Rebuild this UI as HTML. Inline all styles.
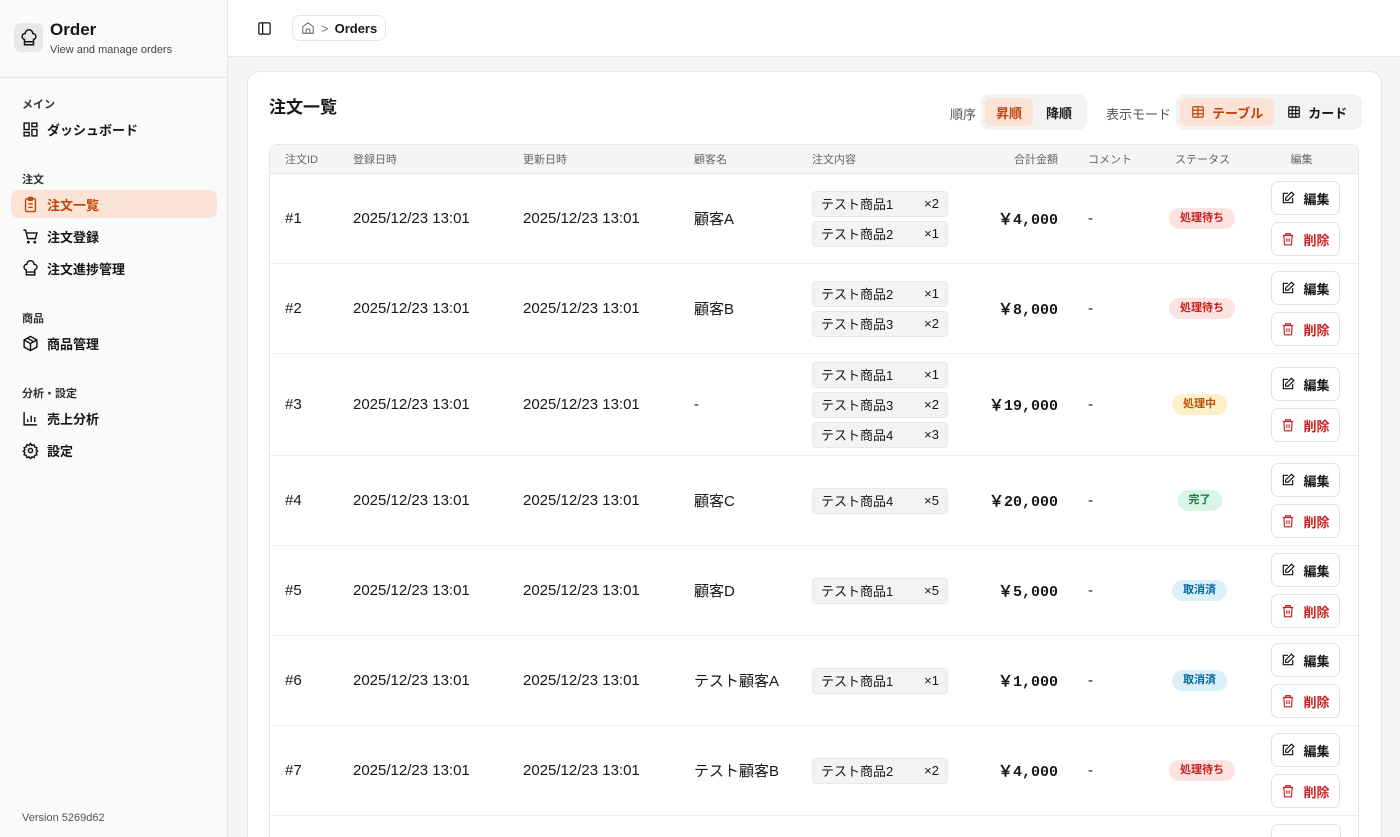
<!DOCTYPE html>
<html style="width:1400px;height:837px;overflow:hidden"><head><meta charset="utf-8"><style>
*{box-sizing:border-box;margin:0;padding:0}
body{width:1400px;height:837px;overflow:hidden;font-family:"Liberation Sans","Noto Sans CJK JP",sans-serif;color:#171717;background:#f5f5f5;position:relative}
.side{position:absolute;left:0;top:0;width:228px;height:837px;background:#fafafa;border-right:1px solid #e5e5e5}
.logo{position:absolute;left:14px;top:23px;width:29px;height:29px;border-radius:7px;background:#e8e8e8;display:flex;align-items:center;justify-content:center}
.t1{position:absolute;left:50px;top:20px;font-size:17px;font-weight:700}
.t2{position:absolute;left:50px;top:44px;font-size:11px;color:#444}
.sep{position:absolute;left:0;top:77px;width:227px;border-top:1px solid #e5e5e5}
.grp{position:absolute;left:22px;font-size:11px;font-weight:700;color:#333}
.item{position:absolute;left:11px;width:206px;height:28px;display:flex;align-items:center;padding-left:11px;font-size:13px;font-weight:700;border-radius:7px}
.item svg{margin-right:8px}
.item.act{background:#fbe4d5;color:#c2410c}
.ver{position:absolute;left:22px;top:812px;font-size:11px;color:#555}
.top{position:absolute;left:228px;top:0;width:1172px;height:57px;background:#fff;border-bottom:1px solid #e5e5e5}
.bc{position:absolute;left:64px;top:15px;height:26px;width:94px;border:1px solid #e5e5e5;border-radius:8px;display:flex;align-items:center;padding-left:8px;gap:6px;font-size:13px;font-weight:700}
.card{position:absolute;left:247px;top:71px;width:1135px;height:766px;background:#fff;border:1px solid #e5e5e5;border-bottom:none;border-radius:12px 12px 0 0;overflow:hidden}
h1{position:absolute;left:21px;top:21px;font-size:17px;font-weight:700}
.lbl{position:absolute;top:32px;font-size:13px;color:#555}
.seg{position:absolute;top:22px;height:36px;background:#f3f3f3;border-radius:8px;display:flex;align-items:center;padding:0 4px;gap:2px}
.seg span{height:28px;display:flex;align-items:center;padding:0 11px;font-size:13px;font-weight:700;border-radius:6px;gap:7px}
.seg .on{background:#fbe4d5;color:#c2410c}
table{position:absolute;left:21px;top:72px;width:1090px;border-collapse:separate;border-spacing:0;border:1px solid #e5e5e5;border-bottom:none;border-radius:8px 8px 0 0;table-layout:fixed}
th{height:29px;background:#f5f5f5;font-size:11px;color:#666;font-weight:400;text-align:left;padding:0 15px;border-bottom:1px solid #e5e5e5}
td{height:90px;font-size:15px;padding:0 15px;border-bottom:1px solid #eee;vertical-align:middle}
.r{text-align:right}.c{text-align:center}
td.c{padding:0 15px 0 9px}
.amt{font-family:"Liberation Mono","DejaVu Sans Mono",monospace;font-weight:700;font-size:15px;text-align:right}
.chip{width:136px;height:26px;background:#f3f3f3;border:1px solid #e8e8e8;border-radius:4px;display:flex;justify-content:space-between;align-items:center;padding:0 8px;font-size:13px;margin:4px 0}
.chip b{font-weight:400}
.st{display:inline-block;white-space:nowrap;height:21px;line-height:21px;padding:0 11px;border-radius:11px;font-size:11px;font-weight:700}
.pw{background:#fde2e2;color:#c81e1e}.pm{background:#fdf0c8;color:#b45309}.dn{background:#d9f5e8;color:#15803d}.cn{background:#dcf0fb;color:#0369a1}
.btn{width:69px;height:34px;border:1px solid #e2e2e2;border-radius:7px;display:flex;align-items:center;justify-content:center;gap:8px;font-size:13px;font-weight:700;margin:7px 0 7px 26px;background:#fff}
.del{color:#c81e1e}
</style></head><body>
<div class="side">
<div class="logo"><svg width="18" height="18" viewBox="0 0 24 24" fill="none" stroke="#111" stroke-width="2"><path d="M6 13.9A4 4 0 0 1 7 6a5 5 0 0 1 10 0 4 4 0 0 1 1 7.9V21H6z M6 17h12"/></svg></div>
<div class="t1">Order</div><div class="t2">View and manage orders</div>
<div class="sep"></div>
<div class="grp" style="top:96px">メイン</div>
<div class="item" style="top:115px"><svg width="17" height="17" viewBox="0 0 24 24" fill="none" stroke="#111" stroke-width="2"><rect x="3" y="3" width="7" height="9"/><rect x="14" y="3" width="7" height="5"/><rect x="14" y="12" width="7" height="9"/><rect x="3" y="16" width="7" height="5"/></svg>ダッシュボード</div>
<div class="grp" style="top:171px">注文</div>
<div class="item act" style="top:190px"><svg width="17" height="17" viewBox="0 0 24 24" fill="none" stroke="#c2410c" stroke-width="2"><rect x="5" y="4" width="14" height="18" rx="2"/><rect x="9" y="2" width="6" height="4" rx="1"/><path d="M9 11h6M9 16h6"/></svg>注文一覧</div>
<div class="item" style="top:222px"><svg width="17" height="17" viewBox="0 0 24 24" fill="none" stroke="#111" stroke-width="2"><path d="M2 3h3l3 12h11l2-8H6"/><circle cx="9" cy="20" r="1"/><circle cx="18" cy="20" r="1"/></svg>注文登録</div>
<div class="item" style="top:254px"><svg width="17" height="17" viewBox="0 0 24 24" fill="none" stroke="#111" stroke-width="2"><path d="M6 13.9A4 4 0 0 1 7 6a5 5 0 0 1 10 0 4 4 0 0 1 1 7.9V21H6z M6 17h12"/></svg>注文進捗管理</div>
<div class="grp" style="top:310px">商品</div>
<div class="item" style="top:329px"><svg width="17" height="17" viewBox="0 0 24 24" fill="none" stroke="#111" stroke-width="2"><path d="M12 2l9 5v10l-9 5-9-5V7z M3 7l9 5 9-5 M12 12v10 M7.5 4.5l9 5"/></svg>商品管理</div>
<div class="grp" style="top:385px">分析・設定</div>
<div class="item" style="top:404px"><svg width="17" height="17" viewBox="0 0 24 24" fill="none" stroke="#111" stroke-width="2"><path d="M3 3v18h18M8 17v-4M13 17V8M18 17v-7"/></svg>売上分析</div>
<div class="item" style="top:436px"><svg width="17" height="17" viewBox="0 0 24 24" fill="none" stroke="#111" stroke-width="2"><circle cx="12" cy="12" r="3"/><path d="M12 2l2 3 3-1 1 3 3 1-1 3 2 2-2 2 1 3-3 1-1 3-3-1-2 3-2-3-3 1-1-3-3-1 1-3-2-2 2-2-1-3 3-1 1-3 3 1z"/></svg>設定</div>
<div class="ver">Version 5269d62</div>
</div>
<div class="top">
<svg style="position:absolute;left:29px;top:21px" width="15" height="15" viewBox="0 0 24 24" fill="none" stroke="#111" stroke-width="2"><rect x="3" y="3" width="18" height="18" rx="2"/><path d="M9 3v18"/></svg>
<div class="bc"><svg width="14" height="14" viewBox="0 0 24 24" fill="none" stroke="#777" stroke-width="2"><path d="M3 10l9-7 9 7v11H3z M9 21v-7h6v7"/></svg><span style="color:#777;font-weight:400">&gt;</span>Orders</div>
</div>
<div class="card">
<h1>注文一覧</h1>
<div class="lbl" style="left:702px">順序</div>
<div class="seg" style="left:733px"><span class="on">昇順</span><span>降順</span></div>
<div class="lbl" style="left:858px">表示モード</div>
<div class="seg" style="left:928px"><span class="on"><svg width="14" height="14" viewBox="0 0 24 24" fill="none" stroke="#c2410c" stroke-width="2"><rect x="3" y="3" width="18" height="18" rx="2"/><path d="M3 9h18M3 15h18M12 3v18"/></svg>テーブル</span><span><svg width="14" height="14" viewBox="0 0 24 24" fill="none" stroke="#111" stroke-width="2"><rect x="3" y="3" width="18" height="18" rx="2"/><path d="M3 9h18M3 15h18M9 3v18M15 3v18"/></svg>カード</span></div>
<table>
<colgroup><col style="width:68px"><col style="width:170px"><col style="width:171px"><col style="width:118px"><col style="width:166px"><col style="width:110px"><col style="width:87px"><col style="width:85px"><col></colgroup>
<tr><th>注文ID</th><th>登録日時</th><th>更新日時</th><th>顧客名</th><th>注文内容</th><th class="r">合計金額</th><th>コメント</th><th class="c">ステータス</th><th class="c">編集</th></tr>
<tr><td>#1</td><td>2025/12/23 13:01</td><td>2025/12/23 13:01</td><td>顧客A</td><td><div class="chip">テスト商品1<b>×2</b></div><div class="chip">テスト商品2<b>×1</b></div></td><td class="amt">￥4,000</td><td>-</td><td class="c"><span class="st pw">処理待ち</span></td><td>BTN</td></tr>
<tr><td>#2</td><td>2025/12/23 13:01</td><td>2025/12/23 13:01</td><td>顧客B</td><td><div class="chip">テスト商品2<b>×1</b></div><div class="chip">テスト商品3<b>×2</b></div></td><td class="amt">￥8,000</td><td>-</td><td class="c"><span class="st pw">処理待ち</span></td><td>BTN</td></tr>
<tr><td style="height:102px">#3</td><td>2025/12/23 13:01</td><td>2025/12/23 13:01</td><td>-</td><td><div class="chip">テスト商品1<b>×1</b></div><div class="chip">テスト商品3<b>×2</b></div><div class="chip">テスト商品4<b>×3</b></div></td><td class="amt">￥19,000</td><td>-</td><td class="c"><span class="st pm">処理中</span></td><td>BTN</td></tr>
<tr><td>#4</td><td>2025/12/23 13:01</td><td>2025/12/23 13:01</td><td>顧客C</td><td><div class="chip">テスト商品4<b>×5</b></div></td><td class="amt">￥20,000</td><td>-</td><td class="c"><span class="st dn">完了</span></td><td>BTN</td></tr>
<tr><td>#5</td><td>2025/12/23 13:01</td><td>2025/12/23 13:01</td><td>顧客D</td><td><div class="chip">テスト商品1<b>×5</b></div></td><td class="amt">￥5,000</td><td>-</td><td class="c"><span class="st cn">取消済</span></td><td>BTN</td></tr>
<tr><td>#6</td><td>2025/12/23 13:01</td><td>2025/12/23 13:01</td><td>テスト顧客A</td><td><div class="chip">テスト商品1<b>×1</b></div></td><td class="amt">￥1,000</td><td>-</td><td class="c"><span class="st cn">取消済</span></td><td>BTN</td></tr>
<tr><td>#7</td><td>2025/12/23 13:01</td><td>2025/12/23 13:01</td><td>テスト顧客B</td><td><div class="chip">テスト商品2<b>×2</b></div></td><td class="amt">￥4,000</td><td>-</td><td class="c"><span class="st pw">処理待ち</span></td><td>BTN</td></tr>
<tr><td style="height:40px;border:none"></td><td style="border:none"></td><td style="border:none"></td><td style="border:none"></td><td style="border:none"></td><td style="border:none"></td><td style="border:none"></td><td style="border:none"></td><td style="border:none"></td></tr>
</table>
<div style="position:absolute;left:1023px;top:752px;width:70px;height:30px;border:1px solid #e2e2e2;border-radius:7px"></div>
</div>
<script>
const b='<div class="btn"><svg width="14" height="14" viewBox="0 0 24 24" fill="none" stroke="#111" stroke-width="2"><path d="M12 4H4v16h16v-8"/><path d="M18 2l4 4-10 10H8v-4z"/></svg>編集</div><div class="btn del"><svg width="14" height="14" viewBox="0 0 24 24" fill="none" stroke="#c81e1e" stroke-width="2"><path d="M3 6h18M8 6V3h8v3M5 6l1 16h12l1-16M10 11v6M14 11v6"/></svg>削除</div>';
document.querySelectorAll('td').forEach(t=>{if(t.textContent==='BTN'){t.innerHTML=b;t.style.padding='0'}});
</script>
</body></html>
